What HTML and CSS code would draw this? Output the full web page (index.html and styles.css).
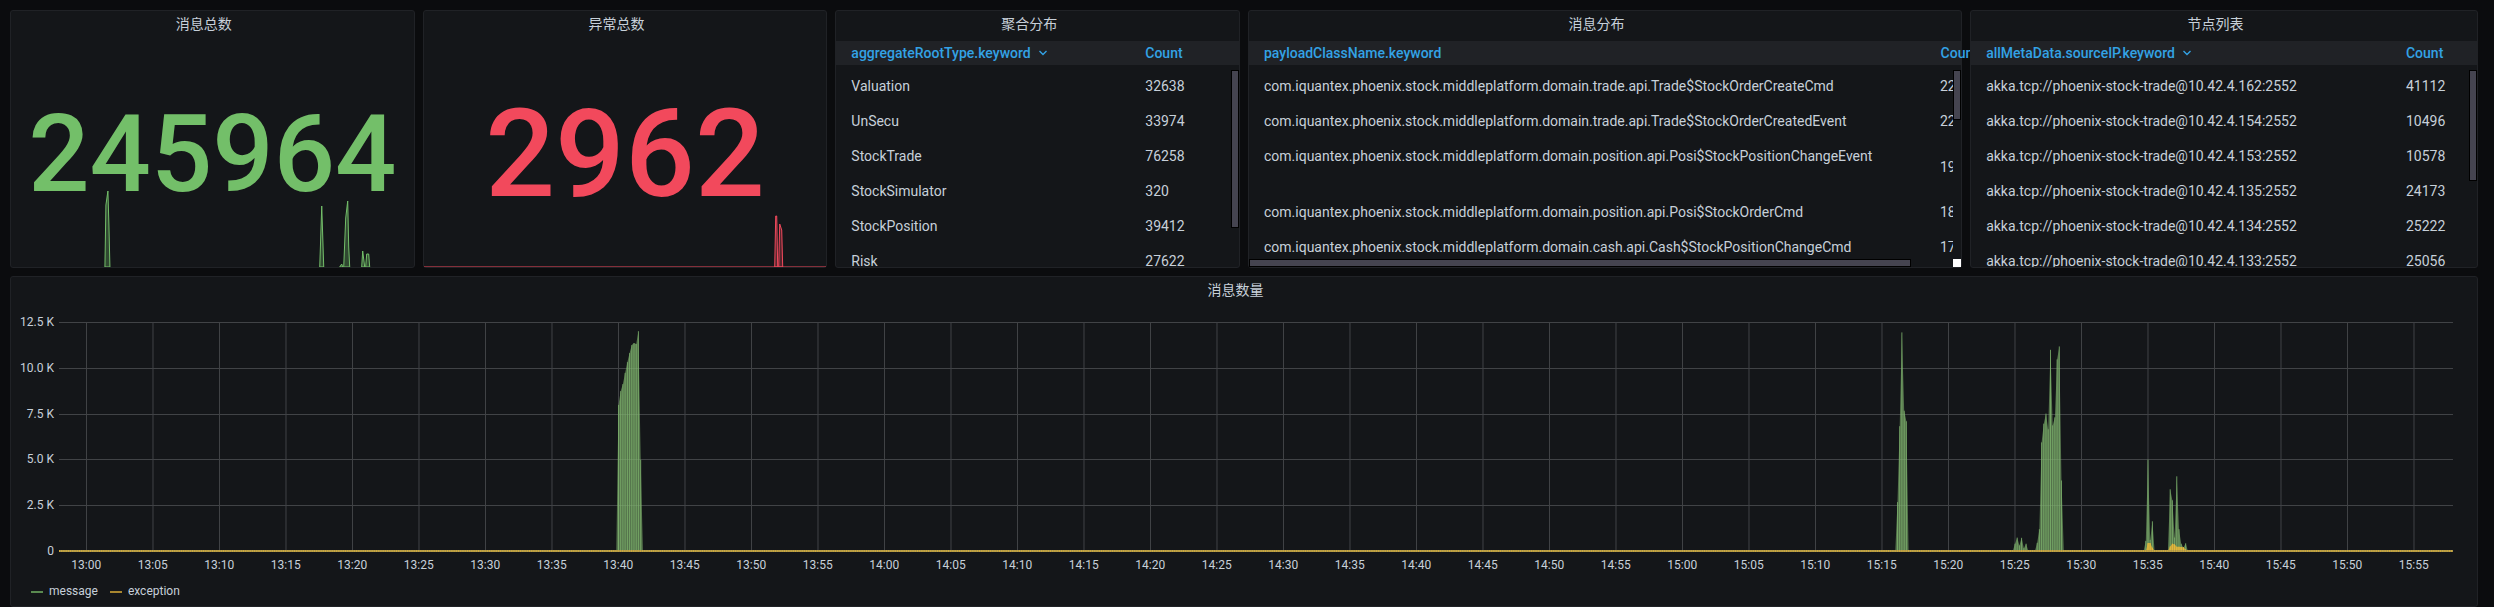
FILE: index.html
```html
<!DOCTYPE html>
<html lang="zh-CN">
<head>
<meta charset="utf-8">
<title>Dashboard</title>
<link rel="stylesheet" href="styles.css">
</head>
<body>
<main class="dashboard">
  <section class="panel span-4">
    <h2 class="panel-title">消息总数</h2>
    <div class="stat stat-green">245964</div>
    <svg class="spark spark-green" viewBox="0 0 403 80" preserveAspectRatio="none" aria-hidden="true">
      <path d="M94 80 L95 18 L97 4 L98 38 L99 80Z M309 80 L311 19 L313 80Z M329 80 L331 77 L332 80Z M333 80 L335 31 L337 14 L338 60 L339 80Z M351 80 L352 64 L354 80Z M355 80 L356 67 L358 67 L359 80Z"/>
    </svg>
  </section>

  <section class="panel span-4">
    <h2 class="panel-title">异常总数</h2>
    <div class="stat stat-red">2962</div>
    <svg class="spark spark-red" viewBox="0 0 403 80" preserveAspectRatio="none" aria-hidden="true">
      <path class="spark-base" d="M0 79.5H403"/>
      <path d="M351 80 L352 29 L353 29 L354 80Z M355 80 L356 37 L358 43 L359 80Z"/>
    </svg>
  </section>

  <section class="panel span-4">
    <h2 class="panel-title">聚合分布</h2>
    <table class="grid-table cols-aggregate">
      <thead>
        <tr><th><button class="sort">aggregateRootType.keyword <svg class="caret" viewBox="0 0 10 6" aria-hidden="true"><path d="M1.5 1 L5 4.5 L8.5 1"/></svg></button></th><th>Count</th></tr>
      </thead>
      <tbody>
        <tr><td>Valuation</td><td>32638</td></tr>
        <tr><td>UnSecu</td><td>33974</td></tr>
        <tr><td>StockTrade</td><td>76258</td></tr>
        <tr><td>StockSimulator</td><td>320</td></tr>
        <tr><td>StockPosition</td><td>39412</td></tr>
        <tr><td>Risk</td><td>27622</td></tr>
      </tbody>
    </table>
    <div class="bar-v bar-long"></div>
  </section>

  <section class="panel span-7">
    <h2 class="panel-title">消息分布</h2>
    <table class="grid-table cols-payload">
      <thead>
        <tr><th>payloadClassName.keyword</th><th>Count</th></tr>
      </thead>
      <tbody>
        <tr><td>com.iquantex.phoenix.stock.middleplatform.domain.trade.api.Trade$StockOrderCreateCmd</td><td>22</td></tr>
        <tr><td>com.iquantex.phoenix.stock.middleplatform.domain.trade.api.Trade$StockOrderCreatedEvent</td><td>22</td></tr>
        <tr class="tall"><td>com.iquantex.phoenix.stock.middleplatform.domain.position.api.Posi$StockPositionChangeEvent</td><td>19</td></tr>
        <tr><td>com.iquantex.phoenix.stock.middleplatform.domain.position.api.Posi$StockOrderCmd</td><td>18</td></tr>
        <tr><td>com.iquantex.phoenix.stock.middleplatform.domain.cash.api.Cash$StockPositionChangeCmd</td><td>17</td></tr>
      </tbody>
    </table>
    <div class="bar-v bar-short"></div>
    <div class="bar-h"></div>
    <div class="bar-corner"></div>
  </section>

  <section class="panel span-5">
    <h2 class="panel-title">节点列表</h2>
    <table class="grid-table cols-nodes">
      <thead>
        <tr><th><button class="sort">allMetaData.sourceIP.keyword <svg class="caret" viewBox="0 0 10 6" aria-hidden="true"><path d="M1.5 1 L5 4.5 L8.5 1"/></svg></button></th><th>Count</th></tr>
      </thead>
      <tbody>
        <tr><td>akka.tcp://phoenix-stock-trade@10.42.4.162:2552</td><td>41112</td></tr>
        <tr><td>akka.tcp://phoenix-stock-trade@10.42.4.154:2552</td><td>10496</td></tr>
        <tr><td>akka.tcp://phoenix-stock-trade@10.42.4.153:2552</td><td>10578</td></tr>
        <tr><td>akka.tcp://phoenix-stock-trade@10.42.4.135:2552</td><td>24173</td></tr>
        <tr><td>akka.tcp://phoenix-stock-trade@10.42.4.134:2552</td><td>25222</td></tr>
        <tr><td>akka.tcp://phoenix-stock-trade@10.42.4.133:2552</td><td>25056</td></tr>
      </tbody>
    </table>
    <div class="bar-v bar-mid"></div>
  </section>

  <section class="panel chart-panel">
    <h2 class="panel-title">消息数量</h2>
    <div class="chart">
      <div class="y-axis"><span>12.5 K</span><span>10.0 K</span><span>7.5 K</span><span>5.0 K</span><span>2.5 K</span><span>0</span></div>
      <svg class="plot" id="plot" viewBox="0 0 2394 231" preserveAspectRatio="none" role="img" aria-label="消息数量"></svg>
      <div class="x-axis" id="x-axis"></div>
    </div>
    <div class="legend">
      <button class="legend-item"><i class="swatch swatch-message"></i>message</button>
      <button class="legend-item"><i class="swatch swatch-exception"></i>exception</button>
    </div>
  </section>
</main>
<script src="chart.js"></script>
</body>
</html>
```

FILE: chart.js
```javascript
const WIDTH = 2394;
const BASE = 229;
const MAX = 12500;
const START = 12 * 3600 + 57 * 60 + 56;
const SPAN = 10800;

// Each run: start time, then one value per ten seconds.
const message = [
  ["13:39:50", [0, 7970, 8730, 9110, 9720, 10310, 10800, 11240, 11350, 11300, 12000, 4970, 0]],
  ["15:16:00", [0, 2670, 6810, 11930, 7660, 7080, 0]],
  ["15:24:50", [0, 400, 730, 300, 720, 150, 400, 0]],
  ["15:26:30", [0, 450, 1190, 5930, 6950, 7500, 6640, 10980, 6850, 7300, 10460, 11170, 3850, 0]],
  ["15:34:40", [0, 550, 5000, 600, 1620, 0]],
  ["15:36:30", [0, 3370, 2770, 730, 4080, 1190, 400, 180, 420, 0]]
];
const exception = [
  ["15:34:50", [0, 430, 430, 180, 0]],
  ["15:36:30", [0, 250, 400, 360, 230, 230, 220, 200, 80, 0]]
];

const seconds = t => t.split(":").reduce((a, b) => a * 60 + Number(b), 0);
const xAt = s => (s - START) / SPAN * WIDTH;
const yAt = v => BASE - v / MAX * BASE;

function areaAndBars(runs) {
  let area = "", bars = "";
  for (const [start, values] of runs) {
    const t0 = seconds(start);
    const pts = values.map((v, i) => [xAt(t0 + i * 10), yAt(v)]);
    area += "M" + pts.map(p => p[0].toFixed(1) + " " + p[1].toFixed(1)).join("L") + "Z";
    for (const [x, y] of pts) {
      bars += `M${x.toFixed(1)} ${BASE}V${y.toFixed(1)}`;
    }
  }
  return [area, bars];
}

let grid = "";
for (let i = 0; i <= 5; i++) grid += `M0 ${Math.round(i * 45.8) + 0.5}H${WIDTH}`;
for (let i = 0; i < 36; i++) grid += `M${xAt(13 * 3600 + i * 300).toFixed(1)} 0V${BASE}`;

const [mArea, mBars] = areaAndBars(message);
const [eArea, eBars] = areaAndBars(exception);

document.getElementById("plot").innerHTML =
  `<path class="grid-lines" d="${grid}"/>` +
  `<path class="area-message" d="${mArea}"/><path class="bars-message" d="${mBars}"/>` +
  `<path class="area-exception" d="${eArea}"/><path class="bars-exception" d="${eBars}"/>` +
  `<path class="zero-line" d="M0 ${BASE}H${WIDTH}"/><path class="zero-ticks" d="M0 ${BASE}H${WIDTH}"/>`;

const axis = document.getElementById("x-axis");
for (let i = 0; i < 36; i++) {
  const label = document.createElement("span");
  label.textContent = `${13 + Math.floor(i / 12)}:${String(i % 12 * 5).padStart(2, "0")}`;
  axis.append(label);
}
```

FILE: styles.css
```css
* {
  box-sizing: border-box;
}

body {
  margin: 0;
  background: #0b0c0e;
  color: #c7d0d9;
  font: 14px/21px Roboto, "Noto Sans CJK SC", sans-serif;
}

button {
  padding: 0;
  border: 0;
  background: none;
  color: inherit;
  font: inherit;
}

.dashboard {
  display: grid;
  grid-template-columns: repeat(24, minmax(0, 1fr));
  grid-template-rows: 258px auto;
  gap: 8px;
  padding: 10px 16px 0 10px;
}

.panel {
  position: relative;
  display: flex;
  flex-direction: column;
  border: 1px solid #202226;
  border-radius: 3px;
  background: #141619;
}

.span-4 { grid-column: span 4; }
.span-5 { grid-column: span 5; }
.span-7 { grid-column: span 7; }

.panel-title {
  margin: 0;
  padding: 0 17px 2px 0;
  font-size: 14px;
  font-weight: 400;
  line-height: 26px;
  text-align: center;
}

/* Single-value panels */
.stat {
  flex: 1;
  display: flex;
  align-items: center;
  justify-content: center;
  padding-top: 2px;
  font-weight: 500;
  line-height: 1;
}

.stat-green {
  color: #73bf69;
  font-size: 108px;
}

.stat-red {
  color: #f2495c;
  font-size: 123px;
}

.spark {
  position: absolute;
  left: 0;
  bottom: 0;
  width: 100%;
  height: 80px;
}

.spark path {
  stroke-width: 1;
  fill-opacity: 0.3;
}

.spark-green path {
  stroke: #73bf69;
  fill: #73bf69;
}

.spark-red path {
  stroke: #f2495c;
  fill: #f2495c;
}

.spark .spark-base {
  stroke-opacity: 0.5;
}

/* Tables */
.grid-table {
  flex: 1;
  min-height: 0;
  display: flex;
  flex-direction: column;
  gap: 4px;
  margin-top: 2px;
}

.grid-table thead,
.grid-table tbody {
  display: block;
}

.grid-table thead {
  background: #202226;
}

.grid-table tbody {
  flex: 1;
  min-height: 0;
  overflow: hidden;
}

.grid-table tr {
  display: grid;
}

.cols-aggregate tr { grid-template-columns: 73% 27%; }
.cols-payload tr { grid-template-columns: 95% 5%; }
.cols-nodes tr { grid-template-columns: 83% 17%; }

.grid-table th {
  padding: 0 0 0 15px;
  color: #33a2e5;
  font-weight: 500;
  line-height: 24px;
  text-align: left;
  white-space: nowrap;
}

.grid-table td {
  padding: 7px 0 7px 15px;
  white-space: nowrap;
}

.cols-payload tbody {
  width: calc(100% - 8px);
  margin-bottom: 8px;
}

.cols-payload tbody tr {
  grid-template-columns: 96% 4%;
}

.tall {
  min-height: 56px;
}

.tall td:last-child {
  align-self: center;
}

.caret {
  width: 10px;
  height: 6px;
  margin-left: 4px;
  vertical-align: 2px;
  fill: none;
  stroke: #33a2e5;
  stroke-width: 1.4;
}

/* Scrollbars */
.bar-v,
.bar-h,
.bar-corner {
  position: absolute;
  background: #454450;
  border: 1px solid #000;
}

.bar-v {
  top: 59px;
  right: 0;
  width: 8px;
}

.bar-long { height: 158px; }
.bar-mid { height: 111px; }
.bar-short { height: 50px; }

.bar-h {
  left: 0;
  bottom: 0;
  width: 93%;
  height: 8px;
}

.bar-corner {
  right: 0;
  bottom: 0;
  width: 8px;
  height: 8px;
  border: 0;
  background: #fff;
}

/* Time series */
.chart-panel {
  grid-column: 1 / -1;
}

.chart {
  display: grid;
  grid-template-columns: 43px minmax(0, 1fr);
  column-gap: 5px;
  margin-top: 17px;
  padding-right: 24px;
  font-size: 12px;
}

.y-axis {
  display: flex;
  flex-direction: column;
  justify-content: space-between;
  margin: -8px 0 -6px;
  line-height: 16px;
  text-align: right;
}

.plot {
  width: 100%;
  height: 231px;
}

.x-axis {
  grid-column: 2;
  display: grid;
  grid-template-columns: repeat(36, minmax(0, 1fr));
  margin: 4px 6px 0 -6px;
  line-height: 16px;
  text-align: center;
}

.grid-lines {
  fill: none;
  stroke: #414346;
  shape-rendering: crispEdges;
}

.area-message {
  fill: #7eb26d;
  fill-opacity: 0.6;
}

.bars-message {
  stroke: #7eb26d;
  stroke-opacity: 0.8;
  stroke-width: 1;
}

.area-exception {
  fill: #eab839;
  fill-opacity: 0.7;
}

.bars-exception {
  stroke: #eab839;
}

.zero-line {
  stroke: #a8954a;
  stroke-width: 2;
}

.zero-ticks {
  stroke: #d0a93c;
  stroke-width: 2;
  stroke-dasharray: 1 1.217;
}

.legend {
  display: flex;
  gap: 12px;
  padding: 10px 20px 6px;
  font-size: 12px;
  line-height: 17px;
}

.legend-item {
  display: flex;
  align-items: center;
  gap: 6px;
}

.swatch {
  width: 12px;
  height: 2px;
}

.swatch-message { background: #5a8a50; }
.swatch-exception { background: #a8862f; }
```
